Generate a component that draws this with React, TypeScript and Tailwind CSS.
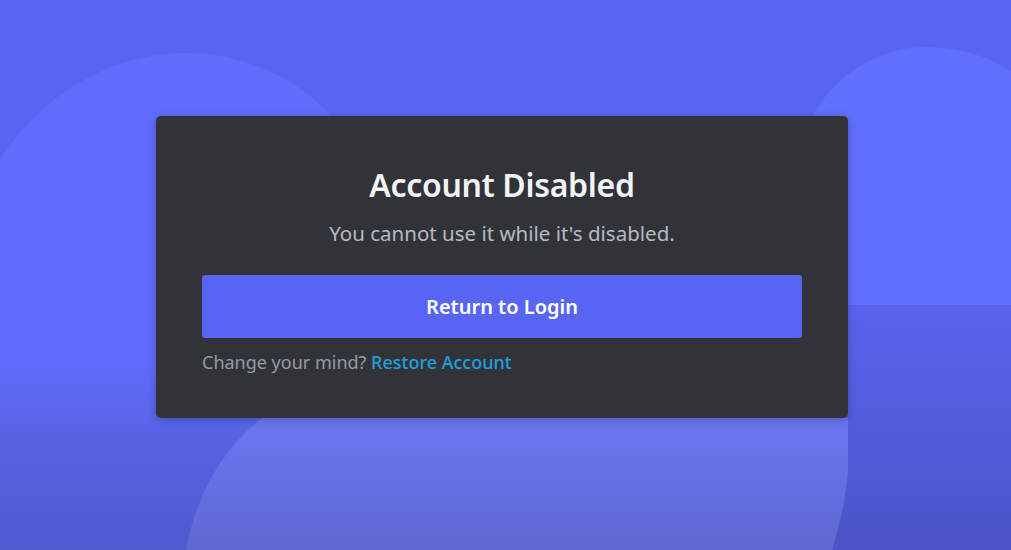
import React from "react";

function Background() {
  return (
    <svg
      className="absolute inset-0 w-full h-full"
      viewBox="0 0 1011 550"
      preserveAspectRatio="none"
      aria-hidden="true"
    >
      <defs>
        <linearGradient id="bgLeft" x1="0" y1="0" x2="0" y2="1">
          <stop offset="0" stopColor="#5f6cfc" />
          <stop offset="0.62" stopColor="#5f6cfb" />
          <stop offset="0.8" stopColor="#5762e0" />
          <stop offset="1" stopColor="#4f5acf" />
        </linearGradient>
        <linearGradient id="bgRightLow" x1="0" y1="0" x2="0" y2="1">
          <stop offset="0" stopColor="#5864ee" />
          <stop offset="0.5" stopColor="#525ddc" />
          <stop offset="1" stopColor="#4a54c6" />
        </linearGradient>
        <linearGradient id="bgBottom" x1="0" y1="0" x2="0" y2="1">
          <stop offset="0" stopColor="#6b77f1" />
          <stop offset="1" stopColor="#5e68d2" />
        </linearGradient>
      </defs>
      <rect x="0" y="0" width="1011" height="550" fill="#5865f1" />
      <path
        d="M0 160 C 40 95, 110 55, 180 53 C 245 52, 300 80, 330 115 L 330 550 L 0 550 Z"
        fill="url(#bgLeft)"
      />
      <path
        d="M815 112 C 835 75, 880 47, 925 47 C 965 47, 995 60, 1011 72 L 1011 305 L 815 305 Z"
        fill="#606ffc"
      />
      <rect x="815" y="305" width="196" height="245" fill="url(#bgRightLow)" />
      <path
        d="M262 418 L 848 418 L 848 470 C 846 500, 838 530, 832 550 L 186 550 C 195 500, 220 450, 262 418 Z"
        fill="url(#bgBottom)"
      />
    </svg>
  );
}

export default function App() {
  return (
    <div
      className="relative w-[1011px] h-[550px] overflow-hidden"
      style={{ fontFamily: '"Noto Sans", "Open Sans", sans-serif' }}
    >
      <Background />
      <div className="relative pt-[116px] pl-[156px]">
        <div className="w-[692px] h-[302px] bg-[#313338] rounded-[5px] shadow-[0_2px_8px_rgba(0,0,0,0.25)] px-[46px] flex flex-col items-center">
          <h1 className="mt-[49px] text-[32px] leading-[40px] font-semibold text-[#f2f3f5] tracking-[-0.3px]">
            Account Disabled
          </h1>
          <p className="mt-[15px] text-[20.5px] leading-[26px] text-[#b5bac1]">
            You cannot use it while it's disabled.
          </p>
          <button className="mt-[29px] w-full h-[63px] rounded-[3px] bg-[#5865f2] text-white text-[20px] font-semibold">
            Return to Login
          </button>
          <div className="mt-[12px] w-full text-[18px] leading-[24px] text-[#949ba4]">
            Change your mind?{" "}
            <span className="text-[#1fa0dd] font-medium">Restore Account</span>
          </div>
        </div>
      </div>
    </div>
  );
}
